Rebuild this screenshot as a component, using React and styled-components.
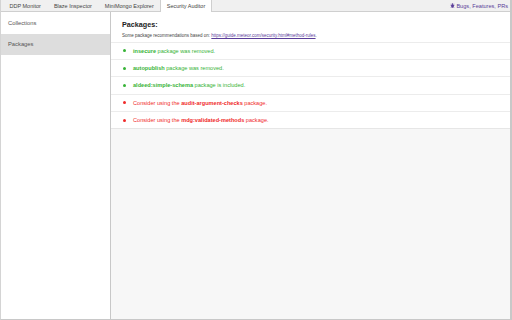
import React from 'react'
import styled, { createGlobalStyle } from 'styled-components'

const Global = createGlobalStyle`
    html, body {
        margin: 0;
        padding: 0;
        background: #ffffff;
    }
    body {
        font-family: "Liberation Sans", Arial, sans-serif;
        color: #333333;
    }
`

const Shell = styled.div`
    width: 512px;
    height: 320px;
    box-sizing: border-box;
    border-left: 1px solid #d4d4d4;
    border-right: 2px solid #c8c8c8;
    border-bottom: 1px solid #c8c8c8;
    display: flex;
    flex-direction: column;
    overflow: hidden;
`

const TabBar = styled.div`
    height: 12px;
    flex: none;
    box-sizing: border-box;
    background-color: #f0f0f0;
    border-bottom: 1px solid #cfcfcf;
    display: flex;
    align-items: stretch;
    padding-left: 2px;
`

const Tab = styled.div`
    font-size: 5.5px;
    color: #444;
    padding: 0 5.5px;
    display: flex;
    align-items: center;
    box-sizing: border-box;
    height: 12px;
    border-left: 1px solid ${p => (p.$active ? '#cfcfcf' : 'transparent')};
    border-right: 1px solid ${p => (p.$active ? '#cfcfcf' : 'transparent')};
    background-color: ${p => (p.$active ? '#ffffff' : 'transparent')};
`

const BugLink = styled.div`
    margin-left: auto;
    padding-right: 2px;
    display: flex;
    align-items: center;
    gap: 1.5px;
    font-size: 5.6px;
    color: #5a3d99;
`

const Body = styled.div`
    flex: 1;
    display: flex;
    min-height: 0;
`

const Sidebar = styled.div`
    width: 110px;
    flex: none;
    box-sizing: border-box;
    background: #ffffff;
    border-right: 1px solid #c8c8c8;
`

const NavItem = styled.div`
    height: 21.5px;
    display: flex;
    align-items: center;
    padding-left: 7px;
    font-size: 5.8px;
    color: #555;
    background-color: ${p => (p.$active ? '#dddddd' : 'transparent')};
`

const Main = styled.div`
    flex: 1;
    background-color: #f7f7f7;
`

const Panel = styled.div`
    background-color: #ffffff;
    border-bottom: 1px solid #e6e6e6;
`

const Header = styled.div`
    padding: 8px 11px 4px;
`

const Title = styled.div`
    font-size: 7.2px;
    font-weight: bold;
    color: #222;
    margin-bottom: 3.5px;
`

const Note = styled.div`
    font-size: 4.5px;
    color: #444;
    a {
        color: #5a3d99;
        text-decoration: underline;
    }
`

const Row = styled.div`
    height: 17.4px;
    box-sizing: border-box;
    border-top: 1px solid #ececec;
    display: flex;
    align-items: center;
    padding-left: 12px;
    font-size: 5.6px;
    color: ${p => (p.$ok ? '#36b336' : '#f02a2a')};
    b {
        font-weight: bold;
    }
`

const Dot = styled.span`
    width: 3px;
    height: 3px;
    border-radius: 50%;
    background-color: currentColor;
    margin-right: 7px;
    flex: none;
`

const rows = [
    { ok: true, name: 'insecure', tail: ' package was removed.' },
    { ok: true, name: 'autopublish', tail: ' package was removed.' },
    { ok: true, name: 'aldeed:simple-schema', tail: ' package is included.' },
    { ok: false, head: 'Consider using the ', name: 'audit-argument-checks', tail: ' package.' },
    { ok: false, head: 'Consider using the ', name: 'mdg:validated-methods', tail: ' package.' },
]

function BugIcon() {
    return (
        <svg width="5" height="5" viewBox="0 0 10 10">
            <rect x="2.5" y="3" width="5" height="6.5" rx="1.5" fill="#5a3d99" />
            <circle cx="5" cy="2.2" r="1.6" fill="#5a3d99" />
            <path d="M1 5h8M1.2 2.5l1.6 1.2M8.8 2.5l-1.6 1.2M1.2 9l1.6-1.4M8.8 9l-1.6-1.4" stroke="#5a3d99" strokeWidth="0.9" />
        </svg>
    )
}

export default function App() {
    return (
        <Shell>
            <Global />
            <TabBar>
                <Tab>DDP Monitor</Tab>
                <Tab>Blaze Inspector</Tab>
                <Tab>MiniMongo Explorer</Tab>
                <Tab $active>Security Auditor</Tab>
                <BugLink>
                    <BugIcon />
                    <span>Bugs, Features, PRs</span>
                </BugLink>
            </TabBar>
            <Body>
                <Sidebar>
                    <NavItem>Collections</NavItem>
                    <NavItem $active>Packages</NavItem>
                </Sidebar>
                <Main>
                    <Panel>
                        <Header>
                            <Title>Packages:</Title>
                            <Note>
                                Some package recommendations based on:{' '}
                                <a>https://guide.meteor.com/security.html#method-rules</a>.
                            </Note>
                        </Header>
                        {rows.map((r, i) => (
                            <Row key={i} $ok={r.ok}>
                                <Dot />
                                <span>
                                    {r.head}
                                    <b>{r.name}</b>
                                    {r.tail}
                                </span>
                            </Row>
                        ))}
                    </Panel>
                </Main>
            </Body>
        </Shell>
    )
}
